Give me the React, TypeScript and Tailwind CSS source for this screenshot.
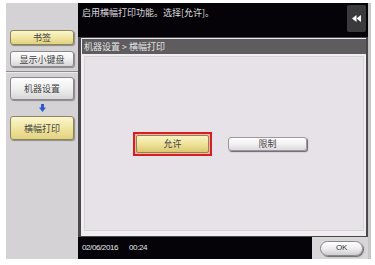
import React from "react";

const cjk = { fontFamily: '"Noto Sans CJK SC", "Noto Sans", sans-serif' };

function YellowBtn({ label, h }: { label: string; h: string }) {
  return (
    <div
      className={`${h} mx-[4px] rounded-[3px] border border-[#8d8457] bg-gradient-to-b from-[#fbf6cf] via-[#f1e6a2] to-[#e2d27f] shadow-[1px_1px_1px_rgba(0,0,0,0.35)] flex items-center justify-center text-[9px] text-[#444] leading-none`}
      style={cjk}
    >
      {label}
    </div>
  );
}

function GrayBtn({ label, h }: { label: string; h: string }) {
  return (
    <div
      className={`${h} mx-[4px] rounded-[3px] border border-[#8a888a] bg-gradient-to-b from-[#fdfdfd] via-[#f0f0f0] to-[#d6d6d6] shadow-[1px_1px_1px_rgba(0,0,0,0.35)] flex items-center justify-center text-[9px] text-[#444] leading-none`}
      style={cjk}
    >
      {label}
    </div>
  );
}

export default function App() {
  return (
    <div className="w-[375px] h-[265px] bg-white pl-[6px] pt-[3px] overflow-hidden">
      <div className="flex h-[256px]">
        {/* left panel */}
        <div className="w-[72px] bg-[#d4d2d4] flex flex-col">
          <div className="h-[27px]" />
          <YellowBtn label="书签" h="h-[15px]" />
          <div className="h-[6px]" />
          <GrayBtn label="显示小键盘" h="h-[16px]" />
          <div className="h-[4px]" />
          <div className="h-[1px] bg-[#8e8c8e]" />
          <div className="h-[1px] bg-[#eceaec]" />
          <div className="h-[4px]" />
          <GrayBtn label="机器设置" h="h-[23px]" />
          <div className="h-[16px] flex items-center justify-center">
            <svg width="7" height="8" viewBox="0 0 7 8">
              <rect x="2" y="0" width="3" height="4" fill="#2a5bd0" />
              <polygon points="0,3.5 7,3.5 3.5,8" fill="#2a5bd0" />
            </svg>
          </div>
          <YellowBtn label="横幅打印" h="h-[24px]" />
        </div>

        {/* main */}
        <div className="w-[290px] flex flex-col bg-[#3e3c3e]">
          {/* top bar */}
          <div className="h-[34px] flex bg-[#d8d6d8]">
            <div className="flex-1 bg-[#050308] pl-[4px] pt-[4px]">
              <div className="text-[9px] leading-[11px] text-[#dcdcdc]" style={cjk}>
                启用横幅打印功能。选择[允许]。
              </div>
            </div>
            <div className="w-[22px] pt-[2px] pl-[1px] bg-[#050308]">
              <div className="w-[19px] h-[27px] rounded-[2px] bg-[#3a393b] shadow-[1px_1px_1px_rgba(0,0,0,0.4)] flex items-center justify-center">
                <svg width="9" height="7" viewBox="0 0 9 7">
                  <polygon points="0,3.5 4.5,0 4.5,7" fill="#ffffff" />
                  <polygon points="4.5,3.5 9,0 9,7" fill="#ffffff" />
                </svg>
              </div>
            </div>
          </div>

          {/* content frame */}
          <div className="h-[200px] pl-[3px] pr-[2px] pt-[1px] pb-[1px] bg-[#4a484a]">
            <div className="h-full bg-[#efedef] pt-[1px] pl-[1px] flex flex-col">
              <div className="h-[15px] bg-[#5e5c5f] flex items-center pl-[2px]">
                <span className="text-[9px] leading-none text-[#e4e4e4]" style={cjk}>
                  机器设置 &gt; 横幅打印
                </span>
              </div>
              <div className="flex-1 m-[2px] mb-[5px] bg-[#e6e2e8] border border-[#d6d2d8] flex items-center justify-center gap-[16px] pr-[8px]">
                <div className="w-[79px] h-[24px] border-[2px] border-[#d81e1e] p-[1px] bg-[#f3b4a8]">
                  <div
                    className="w-full h-full rounded-[2px] border border-[#8d8457] bg-gradient-to-b from-[#fbf4c4] via-[#efe29a] to-[#dcc870] flex items-center justify-center text-[9px] leading-none text-[#444]"
                    style={cjk}
                  >
                    允许
                  </div>
                </div>
                <div
                  className="w-[79px] h-[14px] rounded-[3px] border border-[#9a989a] bg-gradient-to-b from-[#ffffff] via-[#f2f0f2] to-[#dcdadc] shadow-[1px_1px_1px_rgba(0,0,0,0.55)] flex items-center justify-center text-[9px] leading-none text-[#444]"
                  style={cjk}
                >
                  限制
                </div>
              </div>
            </div>
          </div>

          {/* bottom bar */}
          <div className="h-[22px] flex">
            <div
              className="flex-1 bg-[#050308] flex items-center pl-[4px] gap-[11px] text-[8px] tracking-[-0.4px] text-[#e8e8e8]"
              style={{ fontFamily: '"Liberation Sans", Arial, sans-serif' }}
            >
              <span>02/06/2016</span>
              <span>00:24</span>
            </div>
            <div className="w-[56px] bg-[#d8d6d8] flex items-center pl-[8px]">
              <div
                className="w-[43px] h-[15px] rounded-full border border-[#8a888a] bg-gradient-to-b from-[#ffffff] via-[#eeeeee] to-[#d0ced0] shadow-[1px_1px_1px_rgba(0,0,0,0.5)] flex items-center justify-center text-[8px] tracking-[-0.4px] leading-none text-[#333]"
                style={{ fontFamily: '"Liberation Sans", Arial, sans-serif' }}
              >
                OK
              </div>
            </div>
          </div>
        </div>
        <div className="w-[3px] h-[256px] bg-[#c8c6c8]" />
      </div>
    </div>
  );
}
